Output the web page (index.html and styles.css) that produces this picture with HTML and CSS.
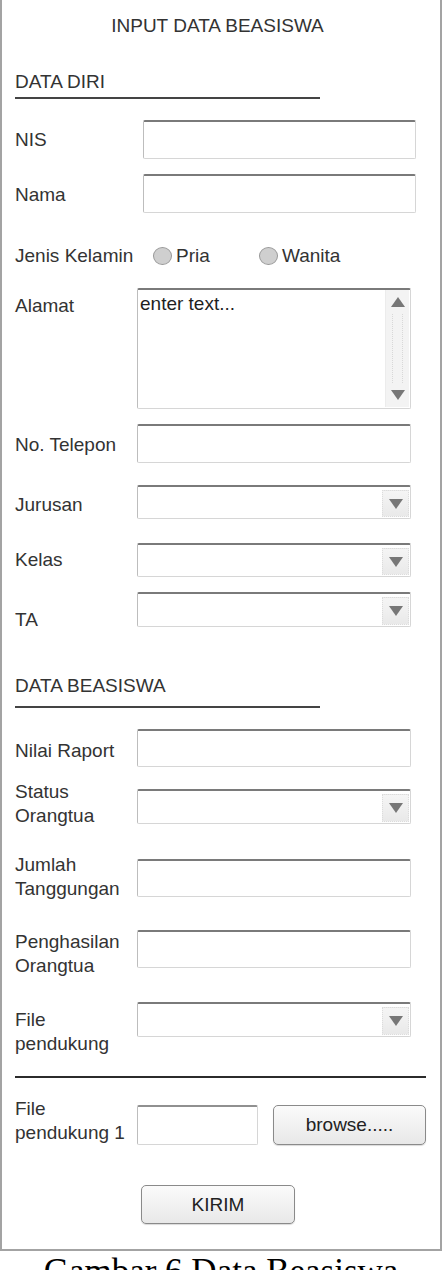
FILE: index.html
```html
<!DOCTYPE html>
<html>
<head>
    <meta charset="UTF-8">
    <title>Input Data Beasiswa</title>
    <link rel="stylesheet" href="styles.css">
</head>
<body>
    <div class="sheet">
        <div class="frame">
            <h1 class="title">INPUT DATA BEASISWA</h1>

            <!-- Data diri -->
            <h2 class="section">DATA DIRI</h2>

            <div class="field f-nis">
                <span class="lbl">NIS</span>
                <div class="box box-top"></div>
            </div>
            <div class="field f-nama">
                <span class="lbl lbl-9">Nama</span>
                <div class="box box-top"></div>
            </div>
            <div class="gender">
                <span class="lbl">Jenis Kelamin</span>
                <span class="opt"><span class="radio"></span>Pria</span>
                <span class="opt"><span class="radio"></span>Wanita</span>
            </div>
            <div class="field f-alamat">
                <span class="lbl lbl-6">Alamat</span>
                <div class="box area">
                    <div class="area-text">enter text...</div>
                    <div class="scroll">
                        <div class="scroll-btn"><span class="tri-up"></span></div>
                        <div class="scroll-track"></div>
                        <div class="scroll-btn"><span class="tri-down"></span></div>
                    </div>
                </div>
            </div>
            <div class="field f-telp">
                <span class="lbl lbl-9">No. Telepon</span>
                <div class="box"></div>
            </div>
            <div class="field f-jurusan">
                <span class="lbl">Jurusan</span>
                <div class="box select"><span class="drop"><span class="tri-down"></span></span></div>
            </div>
            <div class="field f-kelas">
                <span class="lbl lbl-5">Kelas</span>
                <div class="box select"><span class="drop"><span class="tri-down"></span></span></div>
            </div>
            <div class="field f-ta">
                <span class="lbl lbl-16">TA</span>
                <div class="box select s-35"><span class="drop"><span class="tri-down"></span></span></div>
            </div>

            <!-- Data beasiswa -->
            <h2 class="section section-2">DATA BEASISWA</h2>

            <div class="field f-nilai">
                <span class="lbl lbl-10">Nilai Raport</span>
                <div class="box b-38"></div>
            </div>
            <div class="field f-status">
                <span class="lbl two l-status">Status<br>Orangtua</span>
                <div class="box select s-35"><span class="drop"><span class="tri-down"></span></span></div>
            </div>
            <div class="field f-jumlah">
                <span class="lbl two l-jumlah">Jumlah<br>Tanggungan</span>
                <div class="box b-38"></div>
            </div>
            <div class="field f-hasil">
                <span class="lbl two l-hasil">Penghasilan<br>Orangtua</span>
                <div class="box b-38"></div>
            </div>
            <div class="field f-file">
                <span class="lbl two l-file">File<br>pendukung</span>
                <div class="box select s-35"><span class="drop"><span class="tri-down"></span></span></div>
            </div>

            <hr class="divider">

            <div class="field f-file1">
                <span class="lbl two l-file1">File<br>pendukung 1</span>
                <div class="box file-box"></div>
                <button class="btn browse">browse.....</button>
            </div>

            <div class="submit">
                <button class="btn kirim">KIRIM</button>
            </div>
        </div>
        <p class="caption">Gambar 6 Data Beasiswa</p>
    </div>
</body>
</html>
```

FILE: styles.css
```css
* {
    box-sizing: border-box;
    margin: 0;
    padding: 0;
}
body {
    font-family: "Liberation Sans", Arial, sans-serif;
    font-size: 19px;
    color: #333;
    background-color: #fff;
}
.sheet {
    width: 442px;
}
.frame {
    border: 2px solid #a3a3a3;
    border-top: none;
    padding: 15px 0 25px 13px;
}
.title {
    font-size: 19px;
    font-weight: normal;
    line-height: 22px;
    text-align: center;
    padding-right: 20px;
}
.section {
    width: 305px;
    margin-top: 34px;
    padding-bottom: 4px;
    font-size: 19px;
    font-weight: normal;
    line-height: 22px;
    border-bottom: 2px solid #444;
}
.section-2 {
    margin-top: 44px;
    padding-bottom: 9px;
}

/* baris form */
.field {
    display: flex;
    align-items: flex-start;
}
.lbl {
    width: 122px;
    flex-shrink: 0;
    line-height: 23px;
    margin-top: 8px;
    white-space: nowrap;
}
.lbl-5 { margin-top: 5px; }
.lbl-6 { margin-top: 6px; }
.lbl-9 { margin-top: 9px; }
.lbl-10 { margin-top: 10px; }
.lbl-16 { margin-top: 16px; }
.two { line-height: 24px; }
.l-status { margin-top: -9px; }
.l-jumlah { margin-top: -6px; }
.l-hasil { margin-top: 0; }
.l-file { margin-top: 6px; }
.l-file1 { margin-top: -8px; }

.f-nis { margin-top: 21px; }
.f-nama { margin-top: 15px; }
.f-alamat { margin-top: 21px; }
.f-telp { margin-top: 15px; }
.f-jurusan { margin-top: 22px; }
.f-kelas { margin-top: 24px; }
.f-ta { margin-top: 15px; }
.f-nilai { margin-top: 21px; }
.f-status { margin-top: 22px; }
.f-jumlah { margin-top: 31px; }
.f-hasil { margin-top: 29px; }
.f-file { margin-top: 24px; }
.f-file1 { margin-top: 27px; }

/* kotak isian */
.box {
    width: 274px;
    height: 39px;
    background-color: #fff;
    border: 1px solid #d6d6d6;
    border-top: 2px solid #7a7a7a;
    border-left-color: #bdbdbd;
    border-radius: 2px;
}
.box-top {
    width: 273px;
    margin-left: 6px;
}
.b-38 { height: 38px; }

.select {
    height: 34px;
    display: flex;
    justify-content: flex-end;
    padding: 3px 1px 1px 0;
}
.s-35 { height: 35px; }
.drop {
    width: 27px;
    display: flex;
    align-items: center;
    justify-content: center;
    background: linear-gradient(#f5f5f5, #e9e9e9);
    border: 1px dotted #dcdcdc;
}
.tri-down {
    width: 0;
    height: 0;
    border-left: 7px solid transparent;
    border-right: 7px solid transparent;
    border-top: 10px solid #777;
}
.tri-up {
    width: 0;
    height: 0;
    border-left: 7px solid transparent;
    border-right: 7px solid transparent;
    border-bottom: 10px solid #777;
}

/* alamat */
.area {
    height: 121px;
    display: flex;
    padding: 0 1px 1px 0;
}
.area-text {
    flex: 1;
    padding: 3px 0 0 2px;
    line-height: 22px;
    color: #1f1f1f;
}
.scroll {
    width: 24px;
    display: flex;
    flex-direction: column;
    background-color: #f3f3f3;
    border-left: 1px solid #ececec;
}
.scroll-btn {
    height: 24px;
    display: flex;
    align-items: center;
    justify-content: center;
}
.scroll-track {
    flex: 1;
    margin: 0 6px;
    border-left: 1px dotted #d8d8d8;
    border-right: 1px dotted #d8d8d8;
}

/* jenis kelamin */
.gender {
    display: flex;
    align-items: center;
    height: 23px;
    margin-top: 31px;
}
.gender .lbl {
    margin-top: 0;
}
.opt {
    display: flex;
    align-items: center;
    width: 106px;
    gap: 4px;
}
.gender .lbl + .opt {
    margin-left: 16px;
}
.radio {
    width: 19px;
    height: 18px;
    border-radius: 50%;
    background-color: #cfcfcf;
    border: 1.5px solid #9a9a9a;
}

.divider {
    margin: 20px 14px 0 0;
    border: none;
    border-top: 2px solid #2b2b2b;
}

/* file & tombol */
.file-box {
    width: 121px;
    height: 40px;
    border-top-color: #909090;
}
.btn {
    font-family: "Liberation Sans", Arial, sans-serif;
    font-size: 19px;
    color: #222;
    background: linear-gradient(#fbfbfb, #e8e8e8);
    border: 1px solid #8a8a8a;
    border-radius: 5px;
    box-shadow: 0 1px 1px rgba(0, 0, 0, 0.15);
}
.browse {
    width: 153px;
    height: 40px;
    margin-left: 15px;
}
.submit {
    margin-top: 40px;
    padding-left: 126px;
}
.kirim {
    width: 154px;
    height: 39px;
}

.caption {
    font-family: "Liberation Serif", "Times New Roman", serif;
    font-size: 35px;
    line-height: 40px;
    color: #000;
    text-align: center;
    margin-top: 1px;
}
```
